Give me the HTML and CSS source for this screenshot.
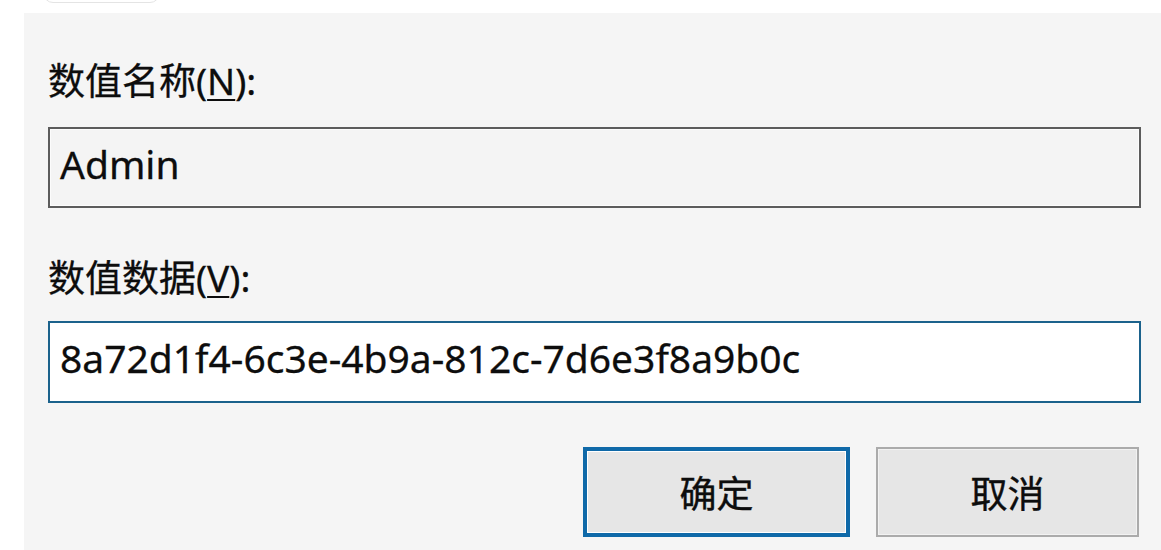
FILE: index.html
```html
<!DOCTYPE html>
<html lang="zh-CN">
<head>
<meta charset="utf-8">
<title>编辑字符串</title>
<link rel="stylesheet" href="styles.css">
</head>
<body>
<div class="topbar"><div class="tab"></div></div>
<div class="panel">
  <div class="label">数值名称(<u>N</u>):</div>
  <div class="field field-readonly">Admin</div>
  <div class="label label-second">数值数据(<u>V</u>):</div>
  <div class="field field-focus">8a72d1f4-6c3e-4b9a-812c-7d6e3f8a9b0c</div>
  <div class="buttons">
    <div class="btn btn-default">确定</div>
    <div class="btn">取消</div>
  </div>
</div>
</body>
</html>
```

FILE: styles.css
```css
html, body {
  margin: 0;
  padding: 0;
  background: #ffffff;
}
body {
  font-family: "Noto Sans", "Noto Sans CJK SC", sans-serif;
  color: #0d0d0d;
  width: 1161px;
  height: 550px;
  overflow: hidden;
}
.topbar {
  height: 13px;
  overflow: hidden;
  padding-left: 43px;
}
.tab {
  width: 117px;
  height: 30px;
  margin-top: -27px;
  border: 1px solid #e4e4e4;
  border-radius: 10px;
  box-sizing: border-box;
}
.panel {
  margin-left: 24px;
  height: 537px;
  background: #f5f5f5;
  padding: 46px 20px 0 24px;
  box-sizing: border-box;
  display: flex;
  flex-direction: column;
}
.label {
  font-size: 37px;
  line-height: 44px;
  height: 44px;
  white-space: nowrap;
  -webkit-text-stroke: 0.3px #0d0d0d;
}
.label u {
  text-decoration-thickness: 2px;
  text-underline-offset: 4px;
}
.label-second {
  margin-top: 48px;
}
.field {
  margin-top: 24px;
  height: 81px;
  box-sizing: border-box;
  display: flex;
  align-items: center;
  padding: 0 0 9px 10px;
  font-size: 39px;
  white-space: nowrap;
  -webkit-text-stroke: 0.3px #0d0d0d;
}
.field-readonly {
  border: 2px solid #5c5c5c;
  box-shadow: inset 0 0 0 1px #fcfcfc;
  background: #f4f4f4;
}
.field-focus {
  margin-top: 21px;
  height: 82px;
  border: 2px solid #1b628c;
  background: #ffffff;
}
.buttons {
  margin-top: 44px;
  display: flex;
  justify-content: flex-end;
  gap: 26px;
  padding-right: 2px;
}
.btn {
  width: 263px;
  height: 90px;
  box-sizing: border-box;
  border: 2px solid #ababab;
  background: #e6e6e6;
  box-shadow: inset 0 0 0 1px #f2f2f2;
  display: flex;
  align-items: center;
  justify-content: center;
  font-size: 37px;
  -webkit-text-stroke: 0.4px #0d0d0d;
}
.btn-default {
  width: 267px;
  border: 4px solid #0f69a8;
  box-shadow: inset 0 0 0 1px #ffffff;
}
```
